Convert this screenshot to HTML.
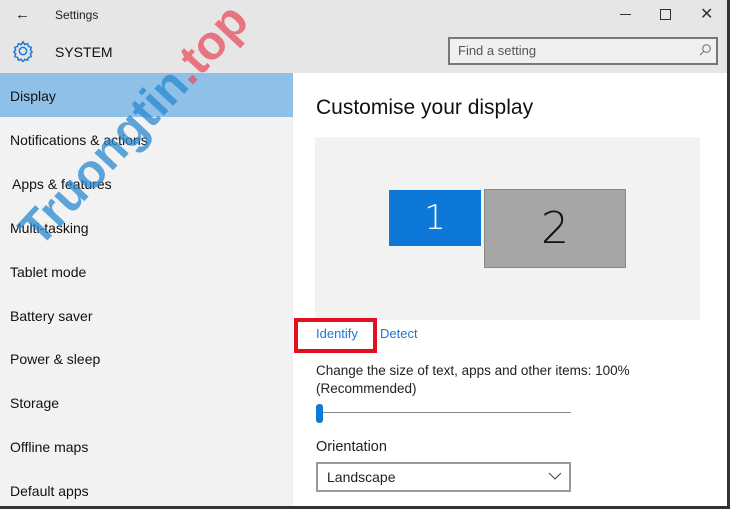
<!DOCTYPE html>
<html><head><meta charset="utf-8"><style>
*{margin:0;padding:0;box-sizing:border-box}
body{width:730px;height:509px;overflow:hidden;background:#fff;font-family:"Liberation Sans",sans-serif;position:relative;color:#000}
.hdr{position:absolute;left:0;top:0;width:730px;height:73px;background:#e6e6e6}
.side{position:absolute;left:0;top:73px;width:293px;height:436px;background:#f2f2f2}
.item{position:absolute;left:10px;font-size:14px;color:#111}
.sel{position:absolute;left:0;top:73px;width:293px;height:44px;background:#8fc0e7}
.abs{position:absolute}
</style></head><body>
<div class="hdr"></div>
<div class="abs" style="left:15px;top:6px;font-size:15px;color:#222">&#8592;</div>
<div class="abs" style="left:55px;top:8px;font-size:12px;color:#222">Settings</div>
<svg class="abs" style="left:12px;top:40px" width="22" height="22" viewBox="0 0 24 24"><path d="M12 2l2 3 3-1 1 3 3 1-1 3 2 2-2 2 1 3-3 1-1 3-3-1-2 3-2-3-3 1-1-3-3-1 1-3-2-2 2-2-1-3 3-1 1-3 3 1z" fill="none" stroke="#1a78d2" stroke-width="1.6"/><circle cx="12" cy="12" r="4" fill="none" stroke="#1a78d2" stroke-width="1.6"/></svg>
<div class="abs" style="left:55px;top:44px;font-size:14px;color:#111">SYSTEM</div>
<div class="abs" style="left:620px;top:14px;width:11px;height:1px;background:#333"></div>
<div class="abs" style="left:660px;top:9px;width:11px;height:11px;border:1px solid #333"></div>
<div class="abs" style="left:700px;top:4px;font-size:16px;color:#333">&#x2715;</div>
<div class="abs" style="left:448px;top:37px;width:270px;height:28px;border:2px solid #777;background:#f0f0f0"></div>
<div class="abs" style="left:458px;top:43px;font-size:13px;color:#555">Find a setting</div>
<svg class="abs" style="left:698px;top:43px" width="14" height="14" viewBox="0 0 14 14"><circle cx="8.5" cy="5.5" r="3.8" fill="none" stroke="#666"/><path d="M5.8 8.2L2 12" stroke="#666"/></svg>
<div class="side"></div>
<div class="sel"></div>
<div class="item" style="top:88px">Display</div>
<div class="item" style="top:132px">Notifications &amp; actions</div>
<div class="item" style="top:176px;left:12px">Apps &amp; features</div>
<div class="item" style="top:220px">Multi-tasking</div>
<div class="item" style="top:264px">Tablet mode</div>
<div class="item" style="top:308px">Battery saver</div>
<div class="item" style="top:351px">Power &amp; sleep</div>
<div class="item" style="top:395px">Storage</div>
<div class="item" style="top:439px">Offline maps</div>
<div class="item" style="top:483px">Default apps</div>
<div class="abs" style="left:316px;top:96px;font-size:21px;color:#111">Customise your display</div>
<div class="abs" style="left:315px;top:137px;width:385px;height:183px;background:#f2f2f2"></div>
<div class="abs" style="left:389px;top:190px;width:92px;height:56px;background:#0d78d7;color:#fff;font-size:34px;text-align:center;line-height:56px;font-family:'DejaVu Sans',sans-serif;font-weight:200">1</div>
<div class="abs" style="left:484px;top:189px;width:142px;height:79px;background:#a6a6a6;border:1px solid #888;color:#111;font-size:44px;text-align:center;line-height:77px;font-family:'DejaVu Sans',sans-serif;font-weight:200">2</div>
<div class="abs" style="left:294px;top:318px;width:83px;height:35px;border:4px solid #e01020"></div>
<div class="abs" style="left:316px;top:326px;font-size:13px;color:#1a78d2">Identify</div>
<div class="abs" style="left:380px;top:326px;font-size:13px;color:#1a78d2">Detect</div>
<div class="abs" style="left:316px;top:363px;font-size:13.5px;color:#222">Change the size of text, apps and other items: 100%</div>
<div class="abs" style="left:316px;top:381px;font-size:13.5px;color:#222">(Recommended)</div>
<div class="abs" style="left:318px;top:412px;width:253px;height:1px;background:#888"></div>
<div class="abs" style="left:316px;top:404px;width:7px;height:19px;border-radius:3px;background:#0d78d7"></div>
<div class="abs" style="left:316px;top:439px;font-size:14.5px;color:#222">Orientation</div>
<div class="abs" style="left:316px;top:462px;width:255px;height:30px;border:2px solid #999"></div>
<div class="abs" style="left:327px;top:469px;font-size:14px;color:#222">Landscape</div>
<svg class="abs" style="left:548px;top:472px" width="14" height="9"><path d="M1 1l6 6 6-6" fill="none" stroke="#444"/></svg>
<div class="abs" style="left:727px;top:0;width:3px;height:509px;background:#333"></div>
<div class="abs" style="left:0;top:506px;width:730px;height:3px;background:#333"></div>
<div class="abs" style="left:-24px;top:90px;transform:rotate(-47deg);transform-origin:center;font-size:48px;font-weight:bold;white-space:nowrap;width:330px;opacity:.75"><span style="color:#2a8ad0">Truongtin</span><span style="color:#e85060">.top</span></div>
</body></html>
